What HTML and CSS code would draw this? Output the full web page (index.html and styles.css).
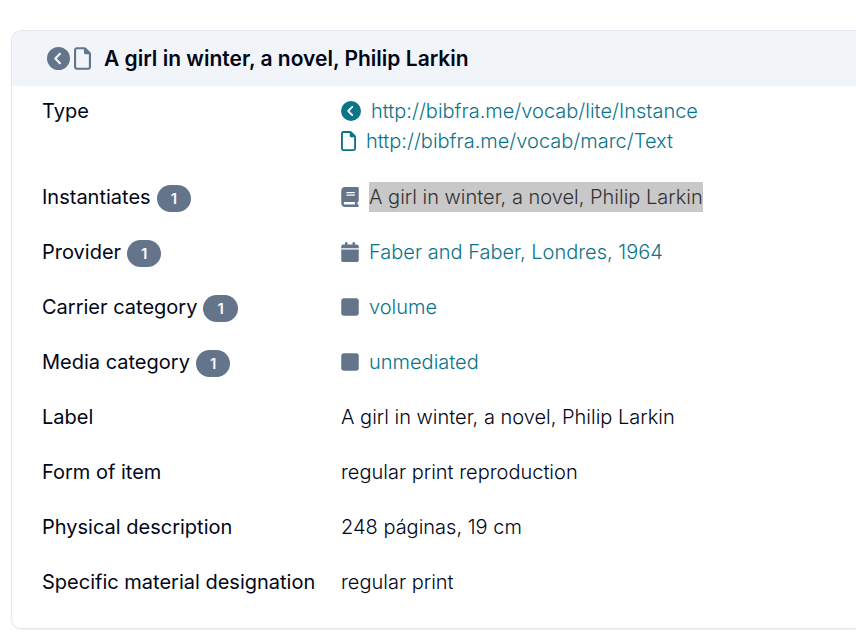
FILE: index.html
```
<!DOCTYPE html>
<html lang="en">
<head>
<meta charset="utf-8">
<meta name="viewport" content="width=device-width, initial-scale=1">
<title>A girl in winter, a novel, Philip Larkin</title>
<link rel="stylesheet" href="styles.css">
</head>
<body>
<svg class="sprite" aria-hidden="true">
  <symbol id="chevron" viewBox="0 0 512 512"><path d="M512 256A256 256 0 1 0 0 256a256 256 0 1 0 512 0zM271 135c9.400-9.400 24.600-9.400 33.900 0s9.400 24.600 0 33.900l-87 87 87 87c9.400 9.400 9.400 24.600 0 33.900s-24.600 9.400-33.900 0L167 273c-9.400-9.400-9.400-24.600 0-33.900L271 135z"/></symbol>
  <symbol id="file" viewBox="0 0 384 512"><path d="M320 464c8.800 0 16-7.200 16-16V160H256c-17.700 0-32-14.300-32-32V48H64c-8.800 0-16 7.200-16 16V448c0 8.800 7.200 16 16 16H320zM0 64C0 28.700 28.700 0 64 0H229.500c17 0 33.300 6.700 45.300 18.700l90.500 90.500c12 12 18.700 28.300 18.700 45.300V448c0 35.300-28.700 64-64 64H64c-35.300 0-64-28.700-64-64V64z"/></symbol>
  <symbol id="book" viewBox="0 0 448 512"><path d="M96 0C43 0 0 43 0 96V416c0 53 43 96 96 96H384h32c17.700 0 32-14.300 32-32s-14.300-32-32-32V384c17.700 0 32-14.300 32-32V32c0-17.700-14.300-32-32-32H384 96zm0 384H352v64H96c-17.700 0-32-14.300-32-32s14.300-32 32-32zm32-240c0-8.800 7.200-16 16-16H336c8.800 0 16 7.200 16 16s-7.200 16-16 16H144c-8.800 0-16-7.200-16-16zm16 48H336c8.800 0 16 7.200 16 16s-7.200 16-16 16H144c-8.800 0-16-7.200-16-16s7.200-16 16-16z"/></symbol>
  <symbol id="calendar" viewBox="0 0 448 512"><path d="M96 32V64H48C21.500 64 0 85.500 0 112v48H448V112c0-26.500-21.500-48-48-48H352V32c0-17.700-14.300-32-32-32s-32 14.300-32 32V64H160V32c0-17.700-14.300-32-32-32S96 14.300 96 32zM448 192H0V464c0 26.500 21.500 48 48 48H400c26.500 0 48-21.500 48-48V192z"/></symbol>
  <symbol id="square" viewBox="0 0 448 512"><path d="M0 96C0 60.700 28.700 32 64 32H384c35.300 0 64 28.700 64 64V416c0 35.300-28.700 64-64 64H64c-35.300 0-64-28.700-64-64V96z"/></symbol>
</svg>
<main class="card">
  <header class="card-header">
    <span class="title-icons">
      <svg class="icon round large"><use href="#chevron"/></svg>
      <svg class="icon file large"><use href="#file"/></svg>
    </span>
    <h1>A girl in winter, a novel, Philip Larkin</h1>
  </header>
  <dl class="details">
    <div class="row types">
      <dt>Type</dt>
      <dd>
        <a class="value" href="http://bibfra.me/vocab/lite/Instance"><svg class="icon round"><use href="#chevron"/></svg>http://bibfra.me/vocab/lite/Instance</a>
        <a class="value" href="http://bibfra.me/vocab/marc/Text"><svg class="icon file"><use href="#file"/></svg>http://bibfra.me/vocab/marc/Text</a>
      </dd>
    </div>
    <div class="row">
      <dt>Instantiates <span class="badge">1</span></dt>
      <dd class="value"><svg class="icon muted"><use href="#book"/></svg><a class="selected" href="#work">A girl in winter, a novel, Philip Larkin</a></dd>
    </div>
    <div class="row">
      <dt>Provider <span class="badge">1</span></dt>
      <dd class="value"><svg class="icon muted"><use href="#calendar"/></svg><a href="#provider">Faber and Faber, Londres, 1964</a></dd>
    </div>
    <div class="row">
      <dt>Carrier category <span class="badge">1</span></dt>
      <dd class="value"><svg class="icon muted"><use href="#square"/></svg><a href="#carrier">volume</a></dd>
    </div>
    <div class="row">
      <dt>Media category <span class="badge">1</span></dt>
      <dd class="value"><svg class="icon muted"><use href="#square"/></svg><a href="#media">unmediated</a></dd>
    </div>
    <div class="row"><dt>Label</dt><dd>A girl in winter, a novel, Philip Larkin</dd></div>
    <div class="row"><dt>Form of item</dt><dd>regular print reproduction</dd></div>
    <div class="row"><dt>Physical description</dt><dd>248 páginas, 19 cm</dd></div>
    <div class="row"><dt>Specific material designation</dt><dd>regular print</dd></div>
  </dl>
</main>
</body>
</html>
```
FILE: styles.css
```
* { box-sizing: border-box; }
body {
  margin: 0;
  padding: 30px 0 14px 11px;
  background: #fff;
  color: #020617;
  font: 400 20px/30px Inter, "Liberation Sans", sans-serif;
}
.sprite { display: none; }
.card {
  border: 1px solid #e2e8f0;
  border-right: 0;
  border-radius: 10px 0 0 10px;
  box-shadow: 0 1px 2px rgba(15, 23, 42, .06);
  overflow: hidden;
}
.card-header {
  display: flex;
  align-items: center;
  gap: 13px;
  padding: 12px 35px;
  background: #f1f5f9;
}
.title-icons { display: flex; gap: 4px; color: #64748b; }
h1 { margin: 0; font-size: 21px; line-height: 31px; font-weight: 600; }
.details {
  display: grid;
  gap: 25px;
  margin: 0;
  padding: 10px 30px 31px;
}
.row { display: grid; grid-template-columns: 299px 1fr; }
.row.types { padding-bottom: 1px; }
dt { display: flex; align-items: flex-end; gap: 6px; }
.types dt { align-items: flex-start; }
dd { margin: 0; font-weight: 300; }
a { color: #0b7489; text-decoration: none; }
.value { display: flex; align-items: center; gap: 10px; }
.icon { width: 18px; height: 20px; fill: currentColor; flex: none; }
.icon.round { width: 20px; }
.icon.file { width: 15px; }
.icon.large { height: 23px; }
.icon.round.large { width: 23px; }
.icon.file.large { width: 17px; }
.muted { color: #64748b; }
.selected { background: #c8c8c8; color: #333; }
.badge {
  padding: 0 14px;
  border-radius: 14px;
  background: #64748b;
  color: #f8fafc;
  font-size: 15px;
  line-height: 27px;
  font-weight: 600;
}
```
